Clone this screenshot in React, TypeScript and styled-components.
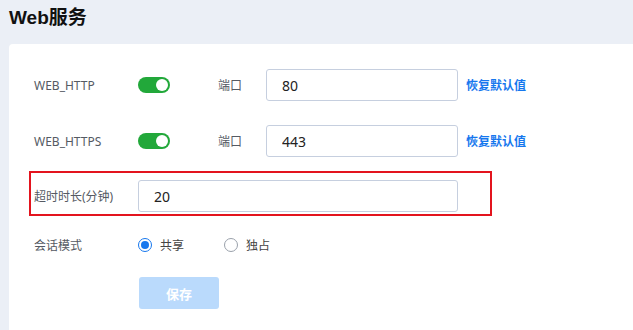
import React, { useState } from 'react';
import styled, { createGlobalStyle } from 'styled-components';

const GlobalStyle = createGlobalStyle`
  html, body {
    margin: 0;
    padding: 0;
    background: #ebeff6;
    font-family: "Noto Sans", "Noto Sans CJK SC", sans-serif;
  }
`;

const Page = styled.div`
  padding: 0 0 0 9px;
  height: 330px;
  overflow: hidden;
  box-sizing: border-box;
`;

const Title = styled.h1`
  margin: 0;
  height: 44px;
  line-height: 36px;
  font-size: 19px;
  font-weight: 700;
  color: #111;
  font-family: "Liberation Sans", "Noto Sans CJK SC", sans-serif;
`;

const Card = styled.div`
  background: #fff;
  border-radius: 4px 0 0 0;
  padding: 25px 0 40px 25px;
  display: flex;
  flex-direction: column;
`;

const Row = styled.div<{ $mt?: number }>`
  display: flex;
  align-items: center;
  height: 32px;
  margin-top: ${p => p.$mt ?? 0}px;
`;

const Highlight = styled.div`
  display: flex;
  align-items: center;
  box-sizing: border-box;
  width: 463px;
  height: 45px;
  margin: 14px 0 0 -5px;
  padding: 6px 0 1px 3px;
  border: 2px solid #e3141e;
`;

const Label = styled.span`
  width: 104px;
  flex: none;
  font-size: 12px;
  color: #555a63;
`;

const PortLabel = styled(Label)`
  width: 48px;
  margin-left: 48px;
`;

const Toggle = styled.span<{ $on: boolean }>`
  position: relative;
  width: 32px;
  height: 16px;
  border-radius: 8px;
  background: ${p => (p.$on ? '#22a83a' : '#c8ccd4')};
  flex: none;
  cursor: pointer;
  &::after {
    content: '';
    position: absolute;
    top: 2px;
    left: ${p => (p.$on ? '18px' : '2px')};
    width: 12px;
    height: 12px;
    border-radius: 50%;
    background: #fff;
  }
`;

const Input = styled.input<{ $w: number }>`
  width: ${p => p.$w}px;
  height: 32px;
  box-sizing: border-box;
  border: 1px solid #c6cfdf;
  border-radius: 3px;
  padding: 0 15px;
  font-size: 14px;
  color: #222;
  font-family: "Noto Sans", "Noto Sans CJK SC", sans-serif;
  outline: none;
`;

const Link = styled.a`
  margin-left: 8px;
  font-size: 12px;
  font-weight: 700;
  color: #1677ee;
  cursor: pointer;
`;

const RadioGroup = styled.div`
  display: flex;
  align-items: center;
  gap: 8px;
`;

const RadioItem = styled.label`
  display: flex;
  align-items: center;
  gap: 8px;
  margin-right: 32px;
  font-size: 12px;
  color: #444;
  cursor: pointer;
`;

const RadioDot = styled.span<{ $on: boolean }>`
  width: 14px;
  height: 14px;
  box-sizing: border-box;
  border-radius: 50%;
  border: 1px solid ${p => (p.$on ? '#1677ee' : '#9aa1ab')};
  display: flex;
  align-items: center;
  justify-content: center;
  &::after {
    content: '';
    width: 8px;
    height: 8px;
    border-radius: 50%;
    background: ${p => (p.$on ? '#1677ee' : 'transparent')};
  }
`;

const SaveButton = styled.button`
  margin: 16px 0 0 105px;
  width: 80px;
  height: 32px;
  border: none;
  border-radius: 3px;
  background: #badafc;
  color: #fff;
  font-size: 13px;
  font-weight: 700;
  font-family: "Noto Sans", "Noto Sans CJK SC", sans-serif;
  cursor: not-allowed;
`;

export default function App() {
  const [http, setHttp] = useState(true);
  const [https, setHttps] = useState(true);
  const [mode, setMode] = useState<'share' | 'own'>('share');

  return (
    <Page>
      <GlobalStyle />
      <Title>Web服务</Title>
      <Card>
        <Row>
          <Label>WEB_HTTP</Label>
          <Toggle $on={http} onClick={() => setHttp(!http)} />
          <PortLabel>端口</PortLabel>
          <Input $w={192} defaultValue="80" />
          <Link>恢复默认值</Link>
        </Row>
        <Row $mt={24}>
          <Label>WEB_HTTPS</Label>
          <Toggle $on={https} onClick={() => setHttps(!https)} />
          <PortLabel>端口</PortLabel>
          <Input $w={192} defaultValue="443" />
          <Link>恢复默认值</Link>
        </Row>
        <Highlight>
          <Label>超时时长(分钟)</Label>
          <Input $w={320} defaultValue="20" />
        </Highlight>
        <Row $mt={13}>
          <Label>会话模式</Label>
          <RadioGroup>
            <RadioItem onClick={() => setMode('share')}>
              <RadioDot $on={mode === 'share'} />
              共享
            </RadioItem>
            <RadioItem onClick={() => setMode('own')}>
              <RadioDot $on={mode === 'own'} />
              独占
            </RadioItem>
          </RadioGroup>
        </Row>
        <div>
          <SaveButton>保存</SaveButton>
        </div>
      </Card>
    </Page>
  );
}
